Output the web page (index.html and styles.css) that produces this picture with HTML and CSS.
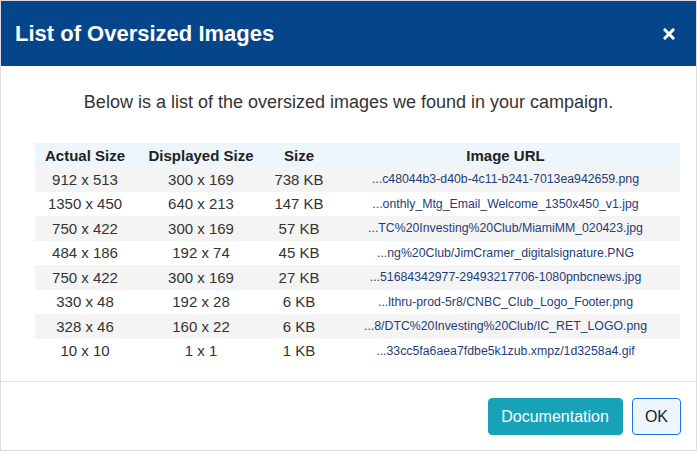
FILE: index.html
```html
<!DOCTYPE html>
<html>
<head>
<meta charset="utf-8">
<link rel="stylesheet" href="styles.css">
</head>
<body>
<div class="modal">
  <div class="modal-header">
    <h1 class="modal-title">List of Oversized Images</h1>
    <button class="close" aria-label="Close">
      <svg width="12" height="12" viewBox="0 0 12 12"><path d="M2 2 L10 10 M10 2 L2 10" stroke="#fff" stroke-width="3" stroke-linecap="square"/></svg>
    </button>
  </div>
  <div class="modal-body">
    <p class="intro">Below is a list of the oversized images we found in your campaign.</p>
    <table class="images">
      <colgroup>
        <col class="c-actual"><col class="c-displayed"><col class="c-size"><col class="c-url">
      </colgroup>
      <thead>
        <tr><th>Actual Size</th><th>Displayed Size</th><th>Size</th><th>Image URL</th></tr>
      </thead>
      <tbody>
        <tr><td>912 x 513</td><td>300 x 169</td><td>738 KB</td><td class="url">...c48044b3-d40b-4c11-b241-7013ea942659.png</td></tr>
        <tr><td>1350 x 450</td><td>640 x 213</td><td>147 KB</td><td class="url">...onthly_Mtg_Email_Welcome_1350x450_v1.jpg</td></tr>
        <tr><td>750 x 422</td><td>300 x 169</td><td>57 KB</td><td class="url">...TC%20Investing%20Club/MiamiMM_020423.jpg</td></tr>
        <tr><td>484 x 186</td><td>192 x 74</td><td>45 KB</td><td class="url">...ng%20Club/JimCramer_digitalsignature.PNG</td></tr>
        <tr><td>750 x 422</td><td>300 x 169</td><td>27 KB</td><td class="url">...51684342977-29493217706-1080pnbcnews.jpg</td></tr>
        <tr><td>330 x 48</td><td>192 x 28</td><td>6 KB</td><td class="url">...lthru-prod-5r8/CNBC_Club_Logo_Footer.png</td></tr>
        <tr><td>328 x 46</td><td>160 x 22</td><td>6 KB</td><td class="url">...8/DTC%20Investing%20Club/IC_RET_LOGO.png</td></tr>
        <tr><td>10 x 10</td><td>1 x 1</td><td>1 KB</td><td class="url">...33cc5fa6aea7fdbe5k1zub.xmpz/1d3258a4.gif</td></tr>
      </tbody>
    </table>
  </div>
  <div class="modal-footer">
    <button class="btn btn-info">Documentation</button>
    <button class="btn btn-ok">OK</button>
  </div>
</div>
</body>
</html>
```
FILE: styles.css
```css
* { box-sizing: border-box; }
html, body { margin: 0; padding: 0; background: #fff; }
body { font-family: "Liberation Sans", Arial, sans-serif; color: #222; }
.modal {
  width: 697px;
  height: 451px;
  border: 1px solid #dcdcdc;
  display: flex;
  flex-direction: column;
  background: #fff;
}
.modal-header {
  height: 65px;
  background: #05458a;
  display: flex;
  align-items: center;
  justify-content: space-between;
  padding: 0 21px 0 14px;
}
.modal-title {
  margin: 0;
  color: #fff;
  font-size: 22px;
  font-weight: bold;
}
.close {
  background: none;
  border: 0;
  padding: 0;
  display: flex;
  cursor: pointer;
}
.modal-body {
  flex: 1;
  padding: 24px 15px 0 34px;
}
.intro {
  margin: 0 0 29px -19px;
  text-align: center;
  font-size: 18px;
  color: #333;
  line-height: 24px;
}
.images {
  width: 645px;
  border-collapse: collapse;
  table-layout: fixed;
  font-size: 15px;
}
.c-actual { width: 100px; }
.c-displayed { width: 132px; }
.c-size { width: 64px; }
.c-url { width: 349px; }
.images th {
  background: #eef6fd;
  font-weight: bold;
  height: 24px;
  padding: 0;
  color: #222;
}
.images td {
  height: 24.5px;
  padding: 0;
  text-align: center;
  color: #333;
  white-space: nowrap;
}
.images tbody tr:nth-child(odd) td { background: #f4f4f4; }
.images td.url { font-size: 12.3px; color: #1f3d78; }
.modal-footer {
  height: 69px;
  border-top: 1px solid #dedede;
  display: flex;
  justify-content: flex-end;
  align-items: flex-start;
  gap: 9px;
  padding: 16px 15px 0 0;
}
.btn {
  height: 37px;
  font-family: "Liberation Sans", Arial, sans-serif;
  font-size: 16px;
  border-radius: 4px;
  padding: 0 13px;
  cursor: pointer;
}
.btn-info {
  background: #17a2b8;
  color: #fff;
  border: 1px solid #17a2b8;
  padding: 0 13px 0 12px;
}
.btn-ok {
  background: #eff6ff;
  color: #222;
  border: 1px solid #1a73e8;
  padding: 0 12px;
}
```
